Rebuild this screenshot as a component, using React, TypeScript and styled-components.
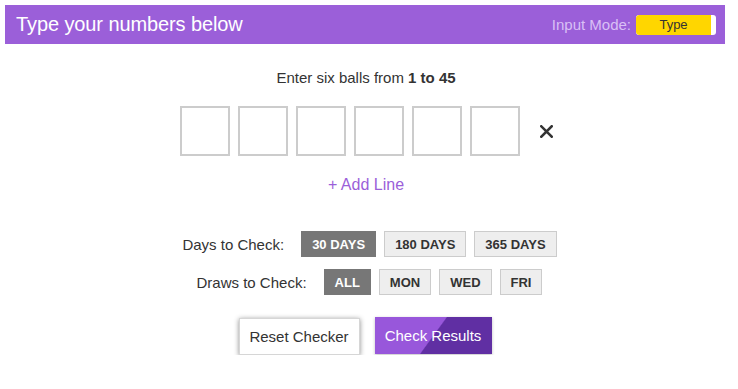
import { FC, useState } from "react";
import styled, { createGlobalStyle } from "styled-components";

const GlobalStyle = createGlobalStyle`
	body {
		margin: 0;
		background: #fff;
		font-family: "Liberation Sans", Arial, sans-serif;
		color: #333;
	}
`;

const Header = styled.div`
	height: 39px;
	margin: 5px 13px 0 5px;
	padding: 0 9px 0 11px;
	display: flex;
	align-items: center;
	justify-content: space-between;
	background-color: #9b5fd9;
`;

const Title = styled.h1`
	margin: 0;
	font-size: 20px;
	font-weight: normal;
	color: #fff;
	letter-spacing: -0.1px;
`;

const ModeBox = styled.div`
	display: flex;
	align-items: center;
	gap: 5px;
	font-size: 15px;
	color: #d9bff5;
`;

const Toggle = styled.div`
	width: 80px;
	height: 20px;
	display: flex;
	background-color: #fff;
	border-radius: 3px;
	overflow: hidden;
`;

const ToggleKnob = styled.span`
	width: 75px;
	display: flex;
	align-items: center;
	justify-content: center;
	background-color: #ffd600;
	border-radius: 3px 0 0 3px;
	font-size: 13px;
	color: #333;
`;

const Main = styled.div`
	padding-right: 6px;
	display: flex;
	flex-direction: column;
	align-items: center;
`;

const Prompt = styled.p`
	margin: 25px 0 0;
	font-size: 15px;
	line-height: 17px;
	color: #333;
`;

const BallRow = styled.div`
	margin-top: 20px;
	display: flex;
	align-items: center;
	gap: 8px;
`;

const Ball = styled.input`
	box-sizing: border-box;
	width: 50px;
	height: 50px;
	margin: 0;
	border: 2px solid #ccc;
	border-radius: 0;
	outline: none;
	text-align: center;
	font-family: inherit;
	font-size: 18px;
`;

const ClearButton = styled.button`
	width: 13px;
	height: 13px;
	margin-left: 12px;
	padding: 0;
	display: flex;
	border: none;
	background: transparent;
	cursor: pointer;
`;

const AddLine = styled.button`
	margin-top: 19px;
	padding: 0;
	border: none;
	background: transparent;
	font-family: inherit;
	font-size: 16px;
	line-height: 20px;
	color: #9b5fd9;
	cursor: pointer;
`;

const OptionRow = styled.div<{ $first?: boolean }>`
	margin-top: ${props => (props.$first ? "36px" : "12px")};
	padding-left: 7px;
	display: flex;
	align-items: center;
	gap: 8px;
`;

const OptionLabel = styled.span`
	margin-right: 9px;
	font-size: 15px;
	color: #333;
`;

const OptionButton = styled.button<{ $active?: boolean }>`
	box-sizing: border-box;
	height: 26px;
	padding: 0 10px;
	border: 1px solid ${props => (props.$active ? "#777" : "#ccc")};
	background-color: ${props => (props.$active ? "#777" : "#eee")};
	color: ${props => (props.$active ? "#fff" : "#333")};
	font-family: inherit;
	font-size: 13px;
	font-weight: bold;
	cursor: pointer;
`;

const ActionRow = styled.div`
	margin-top: 22px;
	padding-right: 2px;
	display: flex;
	align-items: flex-start;
	gap: 15px;
`;

const ResetButton = styled.button`
	box-sizing: border-box;
	width: 121px;
	height: 37px;
	margin-top: 1px;
	border: 1px solid #d6d6d6;
	background-color: #fff;
	box-shadow: 0 1px 5px rgba(0, 0, 0, 0.45);
	font-family: inherit;
	font-size: 15px;
	color: #333;
	cursor: pointer;
`;

const CheckButton = styled.button`
	box-sizing: border-box;
	width: 117px;
	height: 37px;
	border: none;
	background: linear-gradient(126deg, #9857db 49.5%, #602fa3 50.5%);
	box-shadow: 0 1px 3px rgba(0, 0, 0, 0.25);
	font-family: inherit;
	font-size: 15px;
	color: #fff;
	cursor: pointer;
`;

const days = ["30 DAYS", "180 DAYS", "365 DAYS"];
const draws = ["ALL", "MON", "WED", "FRI"];

const App: FC = () => {
	const [day, setDay] = useState(days[0]);
	const [draw, setDraw] = useState(draws[0]);
	const [balls, setBalls] = useState<string[]>(["", "", "", "", "", ""]);

	return (
		<>
			<GlobalStyle />
			<Header>
				<Title>Type your numbers below</Title>
				<ModeBox>
					Input Mode:
					<Toggle>
						<ToggleKnob>Type</ToggleKnob>
					</Toggle>
				</ModeBox>
			</Header>

			<Main>
				<Prompt>
					Enter six balls from <b>1 to 45</b>
				</Prompt>

				<BallRow>
					{balls.map((value, i) => (
						<Ball
							key={i}
							value={value}
							onChange={e => {
								const next = [...balls];
								next[i] = e.target.value;
								setBalls(next);
							}}
						/>
					))}
					<ClearButton onClick={() => setBalls(["", "", "", "", "", ""])}>
						<svg width="13" height="13" viewBox="0 0 13 13">
							<path
								d="M1.3 1.3 L11.7 11.7 M11.7 1.3 L1.3 11.7"
								stroke="#333"
								strokeWidth="2.6"
								strokeLinecap="square"
							/>
						</svg>
					</ClearButton>
				</BallRow>

				<AddLine>+ Add Line</AddLine>

				<OptionRow $first>
					<OptionLabel>Days to Check:</OptionLabel>
					{days.map(d => (
						<OptionButton key={d} $active={d === day} onClick={() => setDay(d)}>
							{d}
						</OptionButton>
					))}
				</OptionRow>

				<OptionRow>
					<OptionLabel>Draws to Check:</OptionLabel>
					{draws.map(d => (
						<OptionButton key={d} $active={d === draw} onClick={() => setDraw(d)}>
							{d}
						</OptionButton>
					))}
				</OptionRow>

				<ActionRow>
					<ResetButton>Reset Checker</ResetButton>
					<CheckButton>Check Results</CheckButton>
				</ActionRow>
			</Main>
		</>
	);
};

export default App;
